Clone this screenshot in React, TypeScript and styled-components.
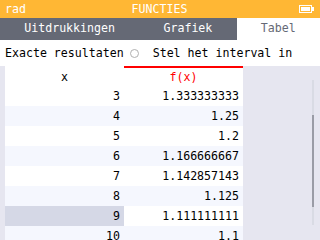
import React from 'react';
import styled, { createGlobalStyle } from 'styled-components';

const GlobalStyle = createGlobalStyle`
  html, body {
    margin: 0;
    padding: 0;
    background: #ffffff;
  }
  body {
    font-family: 'DejaVu Sans Mono', 'Liberation Mono', monospace;
    font-size: 11.6px;
  }
`;

const Screen = styled.div`
  width: 320px;
  height: 240px;
  overflow: hidden;
  display: flex;
  flex-direction: column;
  background: #e6e6f0;
`;

const StatusBar = styled.div`
  height: 18px;
  background: #ffb734;
  color: #ffffff;
  display: flex;
  align-items: center;
  padding: 0 6px 0 5px;
  flex: none;
`;

const StatusSide = styled.div`
  width: 40px;
  display: flex;
  justify-content: ${({ $end }: { $end?: boolean }) => ($end ? 'flex-end' : 'flex-start')};
`;

const StatusTitle = styled.div`
  flex: 1;
  text-align: center;
`;

const TabBar = styled.div`
  height: 22px;
  background: #656975;
  display: flex;
  flex: none;
`;

const Tab = styled.div<{ $active?: boolean }>`
  flex: 1 1 auto;
  display: flex;
  align-items: center;
  justify-content: center;
  padding-bottom: 2px;
  box-sizing: border-box;
  color: ${({ $active }) => ($active ? '#656975' : '#ffffff')};
  background: ${({ $active }) => ($active ? '#ffffff' : 'transparent')};
`;

const Toolbar = styled.div`
  height: 26px;
  background: #ffffff;
  display: flex;
  align-items: center;
  padding-left: 5px;
  color: #000000;
  flex: none;
`;

const Radio = styled.span`
  width: 7px;
  height: 7px;
  border: 1px solid #b0b0b0;
  border-radius: 50%;
  margin: 1px 14px 0 6px;
`;

const Body = styled.div`
  flex: 1;
  display: flex;
  min-height: 0;
`;

const Grid = styled.div`
  margin-left: 5px;
  display: grid;
  grid-template-columns: 119px 119px;
  grid-auto-rows: 20px;
  align-content: start;
`;

const Cell = styled.div<{ $shade?: 'head' | 'odd' | 'even' | 'sel'; $color?: string; $center?: boolean }>`
  display: flex;
  align-items: center;
  justify-content: ${({ $center }) => ($center ? 'center' : 'flex-end')};
  padding-right: 4px;
  box-sizing: border-box;
  color: ${({ $color }) => $color || '#000000'};
  background: ${({ $shade }) =>
    $shade === 'even' ? '#f5f7fe' : $shade === 'sel' ? '#d5d8e6' : '#ffffff'};
`;

const HeadCell = styled(Cell)<{ $line?: string }>`
  padding-right: 0;
  border-top: 2px solid ${({ $line }) => $line || 'transparent'};
`;

const Side = styled.div`
  flex: 1;
  display: flex;
  justify-content: flex-end;
  padding-right: 6px;
`;

const Track = styled.div`
  width: 2px;
  height: 145px;
  margin-top: 14px;
  background: #d9dbe4;
`;

const Thumb = styled.div`
  width: 2px;
  height: 92px;
  margin-top: 35px;
  background: #9a9ca6;
`;

const rows = [
  ['3', '1.333333333'],
  ['4', '1.25'],
  ['5', '1.2'],
  ['6', '1.166666667'],
  ['7', '1.142857143'],
  ['8', '1.125'],
  ['9', '1.111111111'],
  ['10', '1.1'],
];

const Battery = () => (
  <svg width="15" height="8" viewBox="0 0 15 8">
    <rect x="0.5" y="0.5" width="12" height="7" fill="none" stroke="#fff" />
    <rect x="2" y="2" width="9" height="4" fill="#fff" />
    <rect x="13" y="2" width="2" height="4" fill="#fff" />
  </svg>
);

export default function App() {
  return (
    <Screen>
      <GlobalStyle />
      <StatusBar>
        <StatusSide>rad</StatusSide>
        <StatusTitle>FUNCTIES</StatusTitle>
        <StatusSide $end>
          <Battery />
        </StatusSide>
      </StatusBar>
      <TabBar>
        <Tab>Uitdrukkingen</Tab>
        <Tab>Grafiek</Tab>
        <Tab $active>Tabel</Tab>
      </TabBar>
      <Toolbar>
        Exacte resultaten
        <Radio />
        Stel het interval in
      </Toolbar>
      <Body>
        <Grid>
          <HeadCell $center>x</HeadCell>
          <HeadCell $center $color="#ff0000" $line="#ff0000">
            f(x)
          </HeadCell>
          {rows.map(([x, y], i) => {
            const shade = i % 2 === 1 ? 'even' : 'odd';
            return (
              <React.Fragment key={x}>
                <Cell $shade={x === '9' ? 'sel' : shade}>{x}</Cell>
                <Cell $shade={shade}>{y}</Cell>
              </React.Fragment>
            );
          })}
        </Grid>
        <Side>
          <Track>
            <Thumb />
          </Track>
        </Side>
      </Body>
    </Screen>
  );
}
